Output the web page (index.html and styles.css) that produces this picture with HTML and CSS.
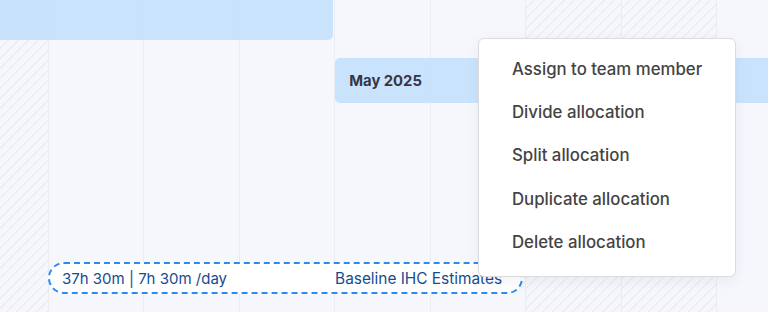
FILE: index.html
```html
<!DOCTYPE html>
<html lang="en">
<head>
<meta charset="utf-8">
<link rel="stylesheet" href="styles.css">
</head>
<body>
<div class="timeline">
  <div class="col c1 hatch"></div>
  <div class="col c2"></div>
  <div class="col c3"></div>
  <div class="col c4"></div>
  <div class="col c5"></div>
  <div class="col c6"></div>
  <div class="col c7 hatch"></div>
  <div class="col c8 hatch"></div>
  <div class="col c9 last"></div>

  <div class="bar bar-top"></div>
  <div class="bar bar-month"><span class="month-label">May 2025</span></div>

  <div class="pill">
    <span class="pill-hours">37h 30m | 7h 30m /day</span>
    <span class="pill-name">Baseline IHC Estimates</span>
  </div>

  <ul class="menu">
    <li class="menu-item">Assign to team member</li>
    <li class="menu-item">Divide allocation</li>
    <li class="menu-item">Split allocation</li>
    <li class="menu-item">Duplicate allocation</li>
    <li class="menu-item">Delete allocation</li>
  </ul>
</div>
</body>
</html>
```

FILE: styles.css
```css
* { box-sizing: border-box; }
html, body { margin: 0; padding: 0; }
body {
  width: 768px;
  height: 312px;
  overflow: hidden;
  background: #f6f7fc;
  font-family: Inter, "Noto Sans", sans-serif;
}
.timeline {
  position: relative;
  width: 768px;
  height: 312px;
  display: grid;
  grid-template-columns: 49px repeat(7, 95.43px) 1fr;
  grid-template-rows: 40px 18px 45px 159px 32px 1fr;
}
.col {
  grid-row: 1 / -1;
  border-right: 1px solid #ebecf1;
}
.col.last { border-right: none; }
.c1 { grid-column: 1; }
.c2 { grid-column: 2; }
.c3 { grid-column: 3; }
.c4 { grid-column: 4; }
.c5 { grid-column: 5; }
.c6 { grid-column: 6; }
.c7 { grid-column: 7; }
.c8 { grid-column: 8; }
.c9 { grid-column: 9; }
.hatch {
  background: repeating-linear-gradient(135deg, #f6f7fc 0 5.5px, #ecedf2 5.5px 7.07px);
}
.bar {
  background: rgba(197, 225, 253, 0.92);
}
.bar-top {
  grid-column: 1 / 5;
  grid-row: 1;
  margin-right: 2px;
  border-bottom-right-radius: 5px;
}
.bar-month {
  grid-column: 5 / -1;
  grid-row: 3;
  border-top-left-radius: 5px;
  border-bottom-left-radius: 5px;
  display: flex;
  align-items: center;
  padding-left: 14px;
}
.month-label {
  font-size: 14.8px;
  font-weight: 700;
  color: #363645;
}
.pill {
  grid-column: 2 / 7;
  grid-row: 5;
  margin-left: -1px;
  margin-right: 3px;
  border: 2px dashed #2a8bf0;
  border-radius: 16px;
  background: #ffffff;
  display: flex;
  align-items: center;
  justify-content: space-between;
  padding: 0 19px 0 12px;
  font-weight: 400;
  color: #164c91;
}
.pill-hours { font-size: 15px; }
.pill-name { font-size: 15.4px; }
.menu {
  position: absolute;
  left: 478px;
  top: 38px;
  width: 258px;
  height: 239px;
  margin: 0;
  padding: 8px 0 0;
  list-style: none;
  background: #ffffff;
  border: 1px solid #dcdcdf;
  border-radius: 6px;
  box-shadow: 0 4px 14px rgba(30, 40, 80, 0.06);
}
.menu-item {
  height: 43.3px;
  display: flex;
  align-items: center;
  padding-left: 33px;
  font-size: 16.8px;
  font-weight: 500;
  color: #444444;
}
```
